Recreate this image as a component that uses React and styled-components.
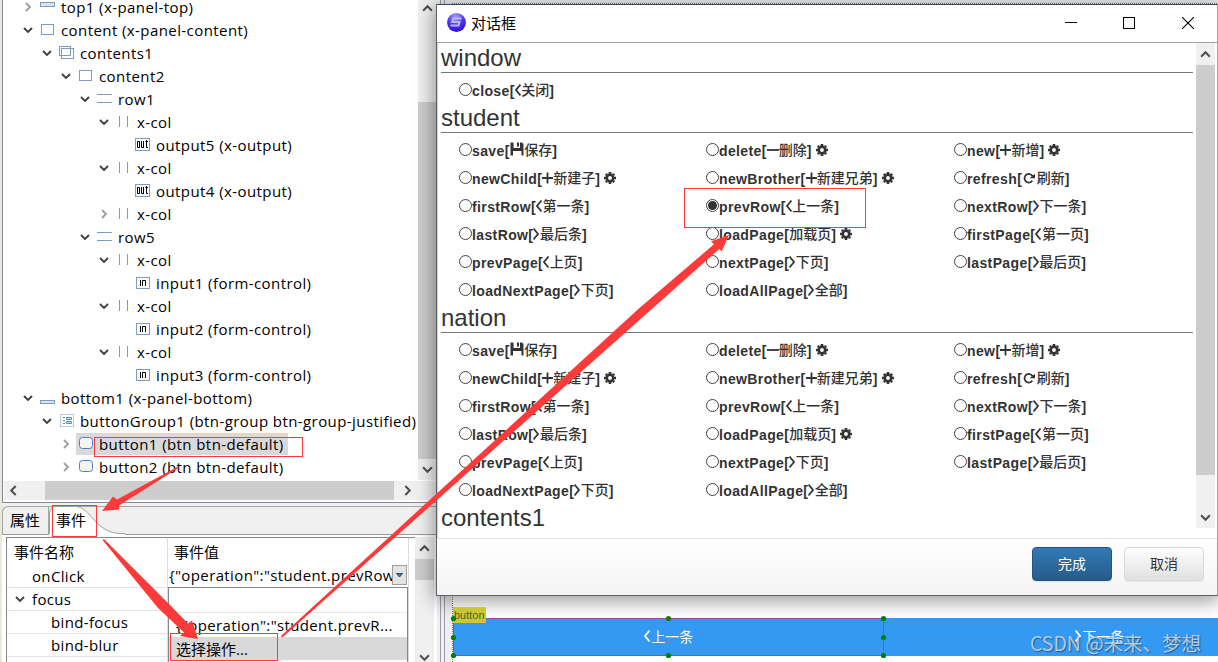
import React from 'react';

import styled, { createGlobalStyle, css } from 'styled-components'

const GlobalStyle = createGlobalStyle`
    * { box-sizing: border-box; }
    body {
        margin: 0;
        overflow: hidden;
    }
`

const Screen = styled.div`
    position: relative;
    display: flex;
    width: 1218px;
    height: 662px;
    overflow: hidden;
    background-color: #f0f0f0;
    font-family: 'Open Sans', 'Noto Sans CJK SC', sans-serif;
    font-size: 15px;
    color: #000;
    white-space: nowrap;
`

/* left side: outline tree + property view */

const SidePane = styled.div`
    display: flex;
    flex: none;
    flex-direction: column;
    width: 437px;
    height: 662px;
    border-left: 2px solid #ece9d8;
`

const TreeView = styled.div`
    display: flex;
    flex-direction: column;
    height: 503px;
    border-left: 1px solid #848a95;
    border-bottom: 1px solid #848a95;
    background-color: #fff;
`

const TreeBody = styled.div`
    display: flex;
    height: 480px;
`

const TreeRows = styled.div`
    width: 415px;
    margin-top: -5px;
    overflow: hidden;
`

const TreeRow = styled.div`
    display: flex;
    align-items: center;
    height: 23px;
    padding-left: ${p => 18 + p.$depth * 19}px;
    letter-spacing: 0.42px;
`

const Twisty = styled.span`
    display: flex;
    flex: none;
    justify-content: center;
    width: 14px;
    margin-right: 3px;
    padding-top: 1px;
`

const NodeLabel = styled.div`
    display: flex;
    flex: none;
    align-items: center;
    height: 22px;
    padding-right: 4px;
    ${p => p.$selected && css`background-color: #d9d9d9;`}

    svg {
        flex: none;
        margin-left: 3px;
        margin-right: 6px;
    }
`

const VBar = styled.div`
    display: flex;
    flex: none;
    flex-direction: column;
    align-items: center;
    width: ${p => p.$width || 19}px;
    height: ${p => p.$height}px;
    background-color: #f0f0f0;
`

const BarButton = styled.div`
    display: flex;
    flex: none;
    align-items: center;
    justify-content: center;
    width: 19px;
    height: ${p => p.$size}px;
    ${p => p.$last && css`margin-top: auto;`}
`

const VThumb = styled.div`
    flex: none;
    width: 100%;
    height: ${p => p.$size}px;
    margin-top: ${p => p.$offset || 0}px;
    background-color: #cdcdcd;
`

const HBar = styled.div`
    display: flex;
    height: 19px;
    margin: 1px 0 2px 1px;
    background-color: #f0f0f0;
`

const HThumb = styled.div`
    width: 349px;
    margin-left: 22px;
    margin-right: 4px;
    background-color: #cdcdcd;
`

const TabStrip = styled.div`
    display: flex;
    height: 29px;
    margin-top: 3px;
    border-top: 1px solid #a5a5a5;
    border-bottom: 1px solid #9a9a9a;
    border-top-left-radius: 6px;
    border-left: 1px solid #a5a5a5;
`

const Tab = styled.div`
    display: flex;
    align-items: center;
    width: 46px;
    padding-left: 7px;
    padding-bottom: 2px;
    border-right: 1px solid #a5a5a5;
`

const ActiveTab = styled.div`
    display: flex;
    width: 76px;
    height: 28px;
    margin-top: -1px;

    svg { flex: none; }
    span {
        margin-left: -69px;
        line-height: 29px;
    }
`

const PropertyFrame = styled.div`
    display: flex;
    flex: 1;
    padding: 2px 0 0 4px;
    background-color: #fff;
`

const PropertyTable = styled.div`
    display: flex;
    width: 409px;
    border-left: 1px solid #848a95;
    border-top: 1px solid #848a95;
`

const Column = styled.div`
    width: ${p => p.$width}px;
    padding-top: 2px;
    border-right: 1px solid #dcdcdc;
`

const Cell = styled.div`
    display: flex;
    align-items: center;
    height: 23px;
    padding-left: ${p => p.$indent}px;
    letter-spacing: 0.35px;
    ${p => p.$line && css`border-bottom: 1px solid #e4e4e4;`}

    svg { margin-right: 7px; }
`

const HeadCell = styled(Cell)`
    height: 25px;
    padding-bottom: 2px;
    letter-spacing: 0;
`

const ValueEditor = styled.div`
    display: flex;
    height: 22px;
    padding-left: 1px;
    line-height: 20px;
    letter-spacing: 0.38px;

    span {
        width: 223px;
        overflow: hidden;
    }
`

const DropButton = styled.div`
    display: flex;
    align-items: center;
    justify-content: center;
    width: 15px;
    height: 20px;
    border: 1px solid #a0a0a0;
    background-color: #e3e3e3;
`

const DropList = styled.div`
    height: 80px;
    border: 1px solid #828790;
    border-bottom: 0;
    background-color: #fff;
`

const DropItem = styled.div`
    height: ${p => p.$h}px;
    padding-left: 7px;
    padding-top: ${p => p.$pad || 0}px;
    line-height: 23px;
    letter-spacing: ${p => p.$selected ? 0 : 0.36}px;
    background-color: ${p => p.$selected ? '#d9d9d9' : '#fff'};
    ${p => p.$line && css`border-bottom: 1px solid #e8e8e8;`}
`

/* right side: page designer */

const Designer = styled.div`
    display: flex;
    flex-direction: column;
    flex: 1;
    margin-left: 3px;
    padding-left: 3px;
    border-left: 1px solid #9b9ca5;
    background-color: #f0f0f0;
`

const Canvas = styled.div`
    display: flex;
    flex-direction: column;
    flex: 1;
    padding-top: 3px;
    padding-left: 7px;
    border-left: 1px solid #9b9ca5;
`

const DesignPage = styled.div`
    display: flex;
    flex-direction: column;
    justify-content: flex-end;
    flex: 1;
    padding-bottom: 6px;
    border-left: 1px dotted #777;
    border-top: 1px dotted #777;
    background-color: #fff;
`

const TypeTag = styled.div`
    z-index: 1;
    width: 33px;
    height: 16px;
    margin-bottom: -5px;
    padding-left: 1px;
    background-color: #c9c92e;
    font: 11px/17px 'Liberation Sans', sans-serif;
    color: #5c5c32;
`

const ButtonRow = styled.div`
    display: flex;
    height: 38px;
    background-color: #3399f3;
`

const PageButton = styled.div`
    display: flex;
    flex: none;
    align-items: center;
    justify-content: center;
    gap: 1px;
    width: 431px;
    height: 38px;
    padding-bottom: 2px;
    border: 1px solid ${p => p.$selected ? '#95528f' : 'transparent'};
    font: 14px 'Noto Sans CJK SC', sans-serif;
    color: #fff;
`

/* dialog window */

const Dialog = styled.div`
    position: absolute;
    left: 436px;
    top: 4px;
    display: flex;
    flex-direction: column;
    width: 782px;
    height: 592px;
    border: 1px solid #5b5f66;
    border-top-color: #2d5068;
    border-right-color: #a0a0a0;
    background-color: #fff;
    box-shadow: 0 3px 18px 2px rgba(0, 0, 0, 0.4);
`

const TitleBar = styled.div`
    display: flex;
    align-items: center;
    height: 38px;
    padding-left: 9px;
    padding-bottom: 1px;
    border-bottom: 1px solid #a3a3a3;

    span {
        flex: 1;
        margin-left: 5px;
        padding-bottom: 2px;
    }
`

const WindowControl = styled.div`
    display: flex;
    align-items: center;
    justify-content: center;
    width: 58.5px;
    height: 36px;
`

const DialogBody = styled.div`
    display: flex;
    justify-content: space-between;
    height: 495px;
    padding: 0 2px 0 3px;
    border-left: 1px solid #d0d0d0;
`

const OperationList = styled.div`
    width: 752px;
    overflow: hidden;
    font-family: 'Liberation Sans', 'Noto Sans CJK SC', sans-serif;
    color: #333;
`

const GroupTitle = styled.div`
    height: 30px;
    margin-bottom: 2px;
    border-bottom: 1px solid ${p => p.$last ? 'transparent' : '#777'};
    font-size: 24px;
    line-height: 30px;
`

const OptionGrid = styled.div`
    display: grid;
    grid-template-columns: 247px 248px 1fr;
    grid-auto-rows: 28px;
    padding-left: 18px;
`

const Option = styled.div`
    display: flex;
    align-items: center;
    padding-top: 1px;
    font-size: 14px;
    line-height: 20px;

    svg { flex: none; }
`

const Radio = styled.span`
    display: flex;
    align-items: center;
    justify-content: center;
    width: 13px;
    height: 13px;
    border: 1px solid #444;
    border-radius: 50%;
    background-color: #fff;

    &::after {
        content: '';
        width: 9px;
        height: 9px;
        border-radius: 50%;
        background-color: ${p => p.$checked ? '#333' : 'transparent'};
    }
`

const OptionName = styled.span`
    padding-top: 2px;
    font-weight: bold;
    letter-spacing: 0.38px;
`

const OptionText = styled.span`
    margin-top: -1px;
    font-family: 'Noto Sans CJK SC', sans-serif;
    font-weight: 500;
`

const DialogFooter = styled.div`
    display: flex;
    justify-content: flex-end;
    flex: 1;
    gap: 12px;
    padding: 8px 13px 0 0;
    border-top: 1px solid #e0e0e0;
    background-image: linear-gradient(#fff, #f4f4f4);
`

const FooterButton = styled.button`
    width: 80px;
    height: 34px;
    padding: 0 0 2px;
    border: 1px solid ${p => p.$primary ? '#245580' : '#dbdbdb'};
    border-radius: 4px;
    background-image: ${p => p.$primary
        ? 'linear-gradient(#337ab7, #265a88)'
        : 'linear-gradient(#fff, #e0e0e0)'};
    box-shadow: 0 1px 1px rgba(0, 0, 0, 0.08);
    font: 14px 'Noto Sans CJK SC', sans-serif;
    color: ${p => p.$primary ? '#fff' : '#333'};
`

/* annotations drawn over everything */

const Marks = styled.svg`
    position: absolute;
    left: 0;
    top: 0;
    z-index: 2;
`

const Watermark = styled.div`
    position: absolute;
    z-index: 2;
    left: 1030px;
    top: 629px;
    font: 19.6px/28px 'Noto Sans CJK SC', sans-serif;
    letter-spacing: -0.1px;
    color: rgba(215, 225, 235, 0.8);
    text-shadow: 1px 1px 1px rgba(40, 60, 90, 0.7);
`

const chevrons = {
    down: 'M1 3 L5 7 L9 3',
    up: 'M1 7 L5 3 L9 7',
    left: 'M7 1 L3 5 L7 9',
    right: 'M3 1 L7 5 L3 9',
}

const Chevron = ({ dir, color = '#505050', size = 10 }) => (
    <svg width={size} height={size} viewBox="0 0 10 10">
        <path d={chevrons[dir]} fill="none" stroke={color} strokeWidth="1.9" />
    </svg>
)

const blue = '#7d9dc0'

const nodeShapes = {
    top: <rect x="-0.5" y="3.5" width="14" height="4" fill="#dbe5f1" stroke={blue} />,
    bottom: <rect x="-0.5" y="10.5" width="14" height="3" fill="#dbe5f1" stroke={blue} />,
    box: <rect x="0.5" y="2.5" width="12" height="10" fill="none" stroke={blue} />,
    boxes: (
        <g fill="none" stroke={blue}>
            <rect x="-0.5" y="1.5" width="11" height="9" />
            <rect x="1.5" y="3.5" width="12" height="10" />
        </g>
    ),
    row: <path d="M-1 3.5 H14 M-1 11.5 H14" stroke={blue} />,
    col: <path d="M2.5 2 V13 M10.5 2 V13" stroke={blue} />,
    out: (
        <g fill="none">
            <rect x="-0.5" y="1.5" width="14" height="12" stroke={blue} />
            <path d="M1.5 4.5 H3.5 V10.5 H1.5 Z M5.5 4 V10.5 H8 M7.5 4 V10.5 M9.5 4.5 H12 M10.5 3 V10.5 H12" stroke="#000" />
        </g>
    ),
    input: (
        <g fill="none">
            <rect x="0.5" y="2.5" width="13" height="11" stroke={blue} />
            <path d="M4.5 5 V11 M6.5 11 V5.5 H9.5 V11" stroke="#000" />
        </g>
    ),
    group: (
        <g fill="none">
            <rect x="0.5" y="1.5" width="13" height="12" stroke="#6c94cc" strokeDasharray="1 1" />
            <path d="M3 4.5 H5 M3 7.5 H5 M3 10.5 H5" stroke="#5b8bc9" />
            <path d="M6.5 4.5 H11.5 V6.5 H6.5 Z M6.5 8.5 H11.5 V10.5 H6.5 Z" fill="#cfe0f5" stroke="#5b8bc9" />
        </g>
    ),
    button: <rect x="0.5" y="1.5" width="13" height="11" rx="3" fill="#f4f4f2" stroke="#4a80c4" />,
}

const NodeIcon = ({ type }) => (
    <svg width="14" height="16" viewBox="0 0 14 16" overflow="visible">{nodeShapes[type]}</svg>
)

const nodes = [
    [0, 'right', 'top', 'top1 (x-panel-top)'],
    [0, 'down', 'box', 'content (x-panel-content)'],
    [1, 'down', 'boxes', 'contents1'],
    [2, 'down', 'box', 'content2'],
    [3, 'down', 'row', 'row1'],
    [4, 'down', 'col', 'x-col'],
    [5, null, 'out', 'output5 (x-output)'],
    [4, 'down', 'col', 'x-col'],
    [5, null, 'out', 'output4 (x-output)'],
    [4, 'right', 'col', 'x-col'],
    [3, 'down', 'row', 'row5'],
    [4, 'down', 'col', 'x-col'],
    [5, null, 'input', 'input1 (form-control)'],
    [4, 'down', 'col', 'x-col'],
    [5, null, 'input', 'input2 (form-control)'],
    [4, 'down', 'col', 'x-col'],
    [5, null, 'input', 'input3 (form-control)'],
    [0, 'down', 'bottom', 'bottom1 (x-panel-bottom)'],
    [1, 'down', 'group', 'buttonGroup1 (btn-group btn-group-justified)'],
    [2, 'right', 'button', 'button1 (btn btn-default)'],
    [2, 'right', 'button', 'button2 (btn btn-default)'],
]

const GlyphLeft = () => (
    <svg width="6.5" height="14" viewBox="0 0 6.5 14"><path d="M5.5 1.5 L1 7 L5.5 12.5" fill="none" stroke="currentColor" strokeWidth="1.8" /></svg>
)
const GlyphRight = () => (
    <svg width="6.5" height="14" viewBox="0 0 6.5 14"><path d="M0.5 1.5 L5 7 L0.5 12.5" fill="none" stroke="currentColor" strokeWidth="1.8" /></svg>
)
const GlyphPlus = () => (
    <svg width="11" height="12" viewBox="0 0 11 12"><path d="M0 6 H11 M5.5 0.5 V11.5" stroke="currentColor" strokeWidth="1.8" /></svg>
)
const GlyphMinus = () => (
    <svg width="12" height="12" viewBox="0 0 12 12"><path d="M0 6 H12" stroke="currentColor" strokeWidth="1.8" /></svg>
)
const GlyphSave = () => (
    <svg width="14.5" height="16" viewBox="0 0 14.5 16">
        <path d="M0.5 0.5 H3.5 V6 H10 V0.5 H12 L13.5 2 V13.5 H11.5 V9 H3 V13.5 H0.5 Z M7 0.5 H9 V4.5 H7 Z" fill="currentColor" />
    </svg>
)
const GlyphRefresh = () => (
    <svg width="14.5" height="12" viewBox="0 0 14.5 12">
        <path d="M10.3 8.8 A4.3 4.3 0 1 1 10.6 4.2" fill="none" stroke="currentColor" strokeWidth="1.8" />
        <path d="M7.6 6.2 H13 V1.8 Z" fill="currentColor" />
    </svg>
)
const Gear = styled.svg`
    margin-left: 4px;
`
const GlyphGear = () => (
    <Gear width="12" height="12" viewBox="0 0 12 12">
        <circle cx="6" cy="6" r="3.2" fill="none" stroke="currentColor" strokeWidth="2.6" />
        <path d="M6 0 V2 M6 10 V12 M0 6 H2 M10 6 H12 M1.8 1.8 L3 3 M9 9 L10.2 10.2 M10.2 1.8 L9 3 M3 9 L1.8 10.2" stroke="currentColor" strokeWidth="2.6" />
    </Gear>
)

const glyphs = {
    left: GlyphLeft,
    right: GlyphRight,
    plus: GlyphPlus,
    minus: GlyphMinus,
    save: GlyphSave,
    refresh: GlyphRefresh,
}

const dataOptions = [
    ['save', 'save', '保存'],
    ['delete', 'minus', '删除', true],
    ['new', 'plus', '新增', true],
    ['newChild', 'plus', '新建子', true],
    ['newBrother', 'plus', '新建兄弟', true],
    ['refresh', 'refresh', '刷新'],
    ['firstRow', 'left', '第一条'],
    ['prevRow', 'left', '上一条'],
    ['nextRow', 'right', '下一条'],
    ['lastRow', 'right', '最后条'],
    ['loadPage', null, '加载页', true],
    ['firstPage', 'left', '第一页'],
    ['prevPage', 'left', '上页'],
    ['nextPage', 'right', '下页'],
    ['lastPage', 'right', '最后页'],
    ['loadNextPage', 'right', '下页'],
    ['loadAllPage', 'right', '全部'],
]

const groups = [
    { title: 'window', options: [['close', 'left', '关闭']] },
    { title: 'student', options: dataOptions, checked: 'prevRow' },
    { title: 'nation', options: dataOptions },
    { title: 'contents1', options: [], last: true },
]

const Logo = () => (
    <svg width="20" height="20" viewBox="0 0 20 20">
        <defs>
            <radialGradient id="ball" cx="0.45" cy="0.2" r="0.85">
                <stop offset="0" stopColor="#a9a4ff" />
                <stop offset="0.5" stopColor="#5137f2" />
                <stop offset="1" stopColor="#2a08c8" />
            </radialGradient>
        </defs>
        <circle cx="10.5" cy="9.5" r="9.4" fill="url(#ball)" />
        <path d="M15.5 5.5 H7.5 L6 9 H13.5 L12.5 12.5 H4.5" fill="none" stroke="#b9b8ff" strokeWidth="2" />
    </svg>
)

function OperationOption({ option, checked }) {
    const [name, glyph, text, gear] = option
    const Glyph = glyphs[glyph]
    return (
        <Option>
            <Radio $checked={checked} />
            <OptionName>{name}[</OptionName>
            {Glyph && <Glyph />}
            <OptionText>{text}</OptionText>
            <OptionName>]</OptionName>
            {gear && <GlyphGear />}
        </Option>
    )
}

function OutlineTree() {
    return (
        <TreeView>
            <TreeBody>
                <TreeRows>
                    {nodes.map(([depth, arrow, icon, label], i) => (
                        <TreeRow key={i} $depth={depth}>
                            <Twisty>
                                {arrow && <Chevron dir={arrow} color={arrow === 'right' ? '#a0a0a0' : '#404040'} />}
                            </Twisty>
                            <NodeLabel $selected={label.startsWith('button1')}>
                                <NodeIcon type={icon} />
                                {label}
                            </NodeLabel>
                        </TreeRow>
                    ))}
                </TreeRows>
                <VBar $height={480}>
                    <BarButton $size={16}><Chevron dir="up" size={11} /></BarButton>
                    <VThumb $offset={86} $size={357} />
                    <BarButton $size={21}><Chevron dir="down" size={11} /></BarButton>
                </VBar>
            </TreeBody>
            <HBar>
                <BarButton $size={19}><Chevron dir="left" size={11} /></BarButton>
                <HThumb />
                <BarButton $size={19}><Chevron dir="right" size={11} /></BarButton>
            </HBar>
        </TreeView>
    )
}

function PropertyView() {
    return (
        <>
            <TabStrip>
                <Tab>属性</Tab>
                <ActiveTab>
                    <svg width="76" height="29" viewBox="0 0 76 29">
                        <path d="M0 29 V8 Q0 0.5 7 0.5 H26 C42 0.5 46 27.5 72 27.5 H76 V29 Z" fill="#fff" />
                        <path d="M0.5 28 V8 Q0.5 0.5 7 0.5 H26 C42 0.5 46 27.5 72 27.5 H76" fill="none" stroke="#a0a0a0" />
                    </svg>
                    <span>事件</span>
                </ActiveTab>
            </TabStrip>
            <PropertyFrame>
                <PropertyTable>
                    <Column $width={161}>
                        <HeadCell $indent={7}>事件名称</HeadCell>
                        <Cell $indent={25} $line>onClick</Cell>
                        <Cell $indent={8} $line><Chevron dir="down" color="#404040" />focus</Cell>
                        <Cell $indent={44} $line>bind-focus</Cell>
                        <Cell $indent={44} $line>bind-blur</Cell>
                    </Column>
                    <Column $width={241}>
                        <HeadCell $indent={6}>事件值</HeadCell>
                        <ValueEditor>
                            <span>{'{"operation":"student.prevRow'}</span>
                            <DropButton>
                                <svg width="7" height="5" viewBox="0 0 7 5">
                                    <path d="M0.5 0.5 H6.5 L3.5 4 Z" fill="#3c8c6c" stroke="#3a3a8a" />
                                </svg>
                            </DropButton>
                        </ValueEditor>
                        <DropList>
                            <DropItem $h={25} $line />
                            <DropItem $h={24} $pad={1}>{'{"operation":"student.prevR...'}</DropItem>
                            <DropItem $h={23} $pad={1} $selected>选择操作...</DropItem>
                        </DropList>
                    </Column>
                </PropertyTable>
                <VBar $width={19} $height={130}>
                    <BarButton $size={22}><Chevron dir="up" size={11} /></BarButton>
                    <VThumb $size={21} />
                    <BarButton $size={19} $last><Chevron dir="down" size={11} /></BarButton>
                </VBar>
            </PropertyFrame>
        </>
    )
}

function OperationDialog() {
    return (
        <Dialog>
            <TitleBar>
                <Logo />
                <span>对话框</span>
                <WindowControl>
                    <svg width="12" height="12"><path d="M0 5.5 H12" stroke="#000" /></svg>
                </WindowControl>
                <WindowControl>
                    <svg width="12" height="12"><rect x="0.5" y="0.5" width="11" height="11" fill="none" stroke="#000" /></svg>
                </WindowControl>
                <WindowControl>
                    <svg width="12" height="12"><path d="M0 0 L12 12 M12 0 L0 12" stroke="#000" strokeWidth="1.1" /></svg>
                </WindowControl>
            </TitleBar>
            <DialogBody>
                <OperationList>
                    {groups.map(group => (
                        <React.Fragment key={group.title}>
                            <GroupTitle $last={group.last}>{group.title}</GroupTitle>
                            <OptionGrid>
                                {group.options.map(option => (
                                    <OperationOption
                                        key={option[0]}
                                        option={option}
                                        checked={group.checked === option[0]}
                                    />
                                ))}
                            </OptionGrid>
                        </React.Fragment>
                    ))}
                </OperationList>
                <VBar $height={485}>
                    <BarButton $size={22}><Chevron dir="up" size={11} /></BarButton>
                    <VThumb $size={410} />
                    <BarButton $size={21} $last><Chevron dir="down" size={11} /></BarButton>
                </VBar>
            </DialogBody>
            <DialogFooter>
                <FooterButton $primary>完成</FooterButton>
                <FooterButton>取消</FooterButton>
            </DialogFooter>
        </Dialog>
    )
}

const handles = [
    [453.5, 618.5], [668.5, 618.5], [883.5, 618.5],
    [453.5, 637.5], [883.5, 637.5],
    [453.5, 655.5], [668.5, 655.5], [883.5, 655.5],
]

function Annotations() {
    return (
        <Marks width="1218" height="662" viewBox="0 0 1218 662">
            {handles.map(([x, y]) => <circle key={x + '-' + y} cx={x} cy={y} r="2.6" fill="#008000" />)}
            <g fill="none" stroke="#fd3a3a">
                <rect x="94.5" y="437.5" width="208" height="19" />
                <rect x="52.5" y="505.5" width="44" height="31" />
                <rect x="170.5" y="633.5" width="107" height="27" />
                <rect x="684.5" y="188.5" width="181" height="39" />
            </g>
            <g fill="#fd3a3a">
                <path d="M178 466.5 L117 499.5 L113 496.5 L102 511 L119.5 509.5 L119 505.5 L178.5 468 Z" />
                <path d="M102.5 540 L158 608 L184 632.5 L180 636 L198 639 L192 620.5 L188 623.5 L171 606 L104 539 Z" />
                <path d="M281 636 L640 307.5 L714 244.3 L711 241.3 L729 235 L721.7 251.5 L719.3 249 L282.3 637.6 Z" />
            </g>
        </Marks>
    )
}

function App() {
    return (
        <Screen>
            <GlobalStyle />
            <SidePane>
                <OutlineTree />
                <PropertyView />
            </SidePane>
            <Designer>
                <Canvas>
                    <DesignPage>
                        <TypeTag>button</TypeTag>
                        <ButtonRow>
                            <PageButton $selected><GlyphLeft />上一条</PageButton>
                            <PageButton><GlyphRight />下一条</PageButton>
                        </ButtonRow>
                    </DesignPage>
                </Canvas>
            </Designer>
            <OperationDialog />
            <Annotations />
            <Watermark>CSDN @未来、梦想</Watermark>
        </Screen>
    );
}


export default App;
